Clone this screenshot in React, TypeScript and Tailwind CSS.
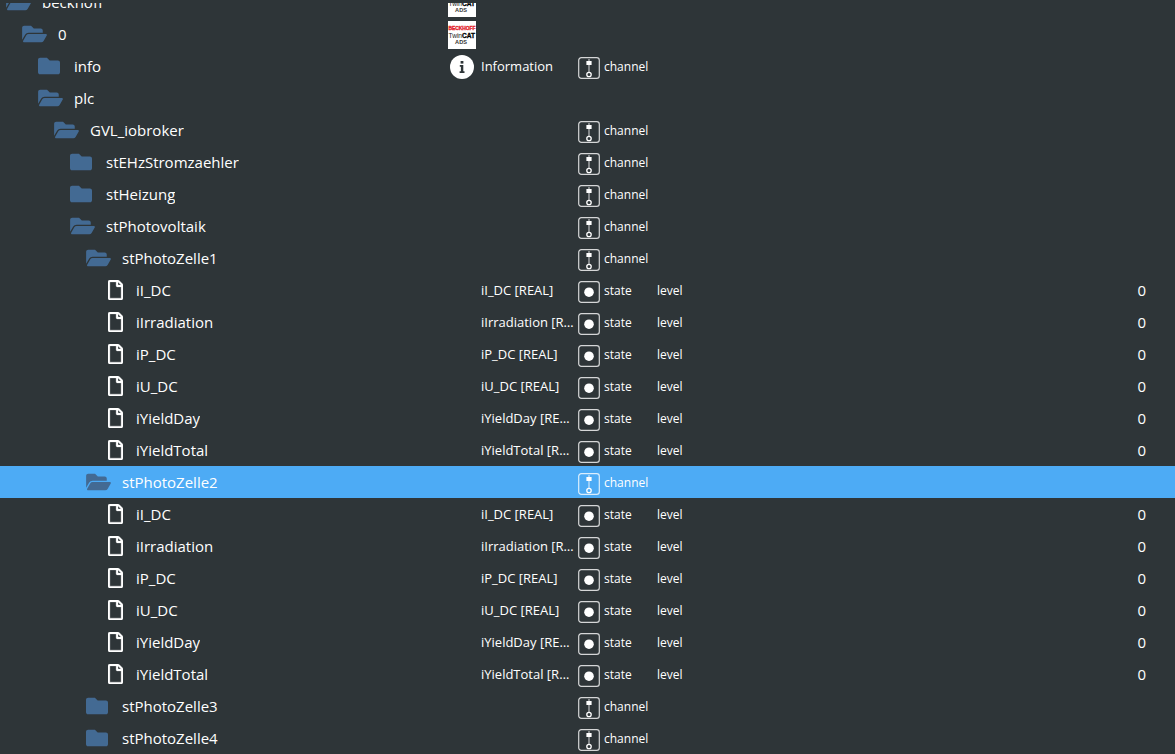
import { FaFolder, FaFolderOpen, FaRegFile } from "react-icons/fa";

type Kind = "open" | "closed" | "file";

interface TreeRow {
  id: string;
  level: number;
  kind: Kind;
  name?: string;
  badge?: "adapter" | "info";
  type?: "channel" | "state";
  role?: string;
  value?: string;
  selected?: boolean;
}

const stateRow = (id: string): TreeRow => ({
  id,
  level: 6,
  kind: "file",
  name: `${id} [REAL]`,
  type: "state",
  role: "level",
  value: "0",
});

const cellStates = ["iI_DC", "iIrradiation", "iP_DC", "iU_DC", "iYieldDay", "iYieldTotal"];

const rows: TreeRow[] = [
  { id: "beckhoff", level: 0, kind: "open", badge: "adapter" },
  { id: "0", level: 1, kind: "open", badge: "adapter" },
  { id: "info", level: 2, kind: "closed", badge: "info", name: "Information", type: "channel" },
  { id: "plc", level: 2, kind: "open" },
  { id: "GVL_iobroker", level: 3, kind: "open", type: "channel" },
  { id: "stEHzStromzaehler", level: 4, kind: "closed", type: "channel" },
  { id: "stHeizung", level: 4, kind: "closed", type: "channel" },
  { id: "stPhotovoltaik", level: 4, kind: "open", type: "channel" },
  { id: "stPhotoZelle1", level: 5, kind: "open", type: "channel" },
  ...cellStates.map(stateRow),
  { id: "stPhotoZelle2", level: 5, kind: "open", type: "channel", selected: true },
  ...cellStates.map(stateRow),
  { id: "stPhotoZelle3", level: 5, kind: "closed", type: "channel" },
  { id: "stPhotoZelle4", level: 5, kind: "closed", type: "channel" },
];

const indent = ["pl-1.5", "pl-[22px]", "pl-[38px]", "pl-[54px]", "pl-[70px]", "pl-[86px]", "pl-[108px]"];

function NodeIcon({ kind }: { kind: Kind }) {
  if (kind === "file") return <FaRegFile className="h-5 w-[15px]" stroke="currentColor" strokeWidth="8" />;
  if (kind === "open") return <FaFolderOpen className="h-[22px] w-[25px] text-[#436a93]" />;
  return <FaFolder className="h-[22px] w-[22px] text-[#436a93]" />;
}

function AdapterLogo() {
  return (
    <svg viewBox="0 0 28 28" className="mt-0.5 block h-7 w-7" role="img" aria-label="Adapter">
      <rect width="28" height="28" fill="#fff" />
      <g textAnchor="middle" fontFamily="Liberation Sans, sans-serif">
        <text x="14" y="9" fontSize="4.9" fontWeight="700" fill="#e3222b" stroke="#e3222b" strokeWidth="0.35">BECKHOFF</text>
        <text x="13.8" y="16.7" fontSize="6.6" fill="#222">
          Twin<tspan fontWeight="700" fill="#000" stroke="#000" strokeWidth="0.3">CAT</tspan>
        </text>
        <text x="13" y="23.4" fontSize="5.6" fontWeight="700" fill="#333">ADS</text>
      </g>
    </svg>
  );
}

function InfoIcon() {
  return (
    <svg viewBox="0 0 24 24" className="mt-0.5 ml-0.5 block h-6 w-6" aria-hidden="true">
      <circle cx="12" cy="12" r="12" fill="#fff" />
      <rect x="10.6" y="6" width="2.8" height="2.6" fill="#2e3538" />
      <path d="M9.8 10h3.5v6.3h1.2V18H9.6v-1.7h1.3v-4.6H9.8z" fill="#2e3538" />
    </svg>
  );
}

function TypeIcon({ type }: { type: "channel" | "state" }) {
  return (
    <svg viewBox="0 0 22 22" className="mt-1 h-[22px] w-[22px] shrink-0" aria-hidden="true">
      <rect x="0.7" y="0.7" width="20.6" height="20.6" rx="2.6" fill="none" stroke="#fff" strokeOpacity="0.8" strokeWidth="1.2" />
      {type === "state" ? (
        <circle cx="11" cy="11.2" r="4.8" fill="#fff" />
      ) : (
        <g stroke="#fff">
          <path d="M11 2v13" strokeOpacity="0.75" strokeWidth="1.1" />
          <rect x="8.4" y="4" width="5.2" height="4" fill="#fff" stroke="none" />
          <circle cx="11" cy="17.5" r="2.2" fill="none" strokeWidth="1.3" />
        </g>
      )}
    </svg>
  );
}

export default function App() {
  return (
    <main className="h-screen overflow-hidden bg-[#2e3538] pt-[3px] font-['Segoe_UI','Open_Sans',sans-serif] text-white">
      <div className="h-full overflow-hidden">
        <table className="-mt-[17px] w-full table-fixed border-collapse">
          <colgroup>
            <col className="w-[448px]" />
            <col className="w-[33px]" />
            <col className="w-[97px]" />
            <col className="w-[79px]" />
            <col />
            <col className="w-[120px]" />
          </colgroup>
          <tbody>
            {rows.map((row, i) => (
              <tr key={i} className={row.selected ? "h-8 bg-[#4dabf5]" : "h-8"}>
                <td className="p-0">
                  <div className={`flex h-8 items-center ${indent[row.level]}`}>
                    <span className={row.kind === "file" ? "w-7 shrink-0" : "w-9 shrink-0"}>
                      <NodeIcon kind={row.kind} />
                    </span>
                    <span className="truncate text-[15px] leading-8">{row.id}</span>
                  </div>
                </td>
                <td className="p-0">
                  {row.badge === "adapter" && <AdapterLogo />}
                  {row.badge === "info" && <InfoIcon />}
                </td>
                <td className="truncate p-0 pr-1 text-[13px] leading-8">{row.name}</td>
                <td className="p-0">
                  {row.type && (
                    <div className="flex h-8 items-center gap-1 text-[12px]">
                      <TypeIcon type={row.type} />
                      <span className="pt-0.5 leading-[30px]">{row.type}</span>
                    </div>
                  )}
                </td>
                <td className="p-0 pt-0.5 text-[12px] leading-[30px]">{row.role}</td>
                <td className="p-0 pr-[29px] text-right text-[15px] leading-8">{row.value}</td>
              </tr>
            ))}
          </tbody>
        </table>
      </div>
    </main>
  );
}
